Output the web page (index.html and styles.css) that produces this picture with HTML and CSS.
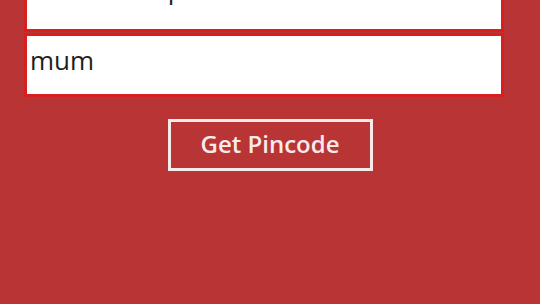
FILE: index.html
```html
<!DOCTYPE html>
<html lang="en">
<head>
    <meta charset="UTF-8">
    <meta name="viewport" content="width=device-width, initial-scale=1.0">
    <title>Pincode Finder</title>
    <link rel="stylesheet" href="styles.css">
</head>
<body>
    <div class="container">
        <div class="field field-top">
            <span class="field-text">Enter place</span>
        </div>
        <div class="field">
            <span class="field-text">mum</span>
        </div>
        <div class="actions">
            <button class="pin-btn">Get Pincode</button>
        </div>
    </div>
</body>
</html>
```

FILE: styles.css
```css
* {
    margin: 0;
    padding: 0;
    box-sizing: border-box;
}

body {
    background: #b93434;
    font-family: 'Open Sans', sans-serif;
    height: 304px;
    overflow: hidden;
}

.container {
    margin-top: -32px;
    padding: 0 36px 0 24px;
    display: flex;
    flex-direction: column;
    gap: 1px;
}

.field {
    height: 64px;
    background: #fff;
    border: 3px solid #d81f1f;
    display: flex;
    align-items: flex-start;
    padding-left: 3px;
}

.field-text {
    font-size: 26px;
    color: #1e1e1e;
    line-height: 1;
    margin-top: 11px;
}

.field-top {
    padding-left: 69px;
}

.field-top .field-text {
    margin-top: 5px;
}

.actions {
    display: flex;
    justify-content: center;
    padding: 21px 0 0 12px;
}

.pin-btn {
    width: 205px;
    height: 52px;
    background: transparent;
    border: 3px solid #f7eaea;
    color: #f7eaea;
    font-family: 'Open Sans', sans-serif;
    font-weight: 600;
    font-size: 24px;
    padding-bottom: 3px;
}
```
